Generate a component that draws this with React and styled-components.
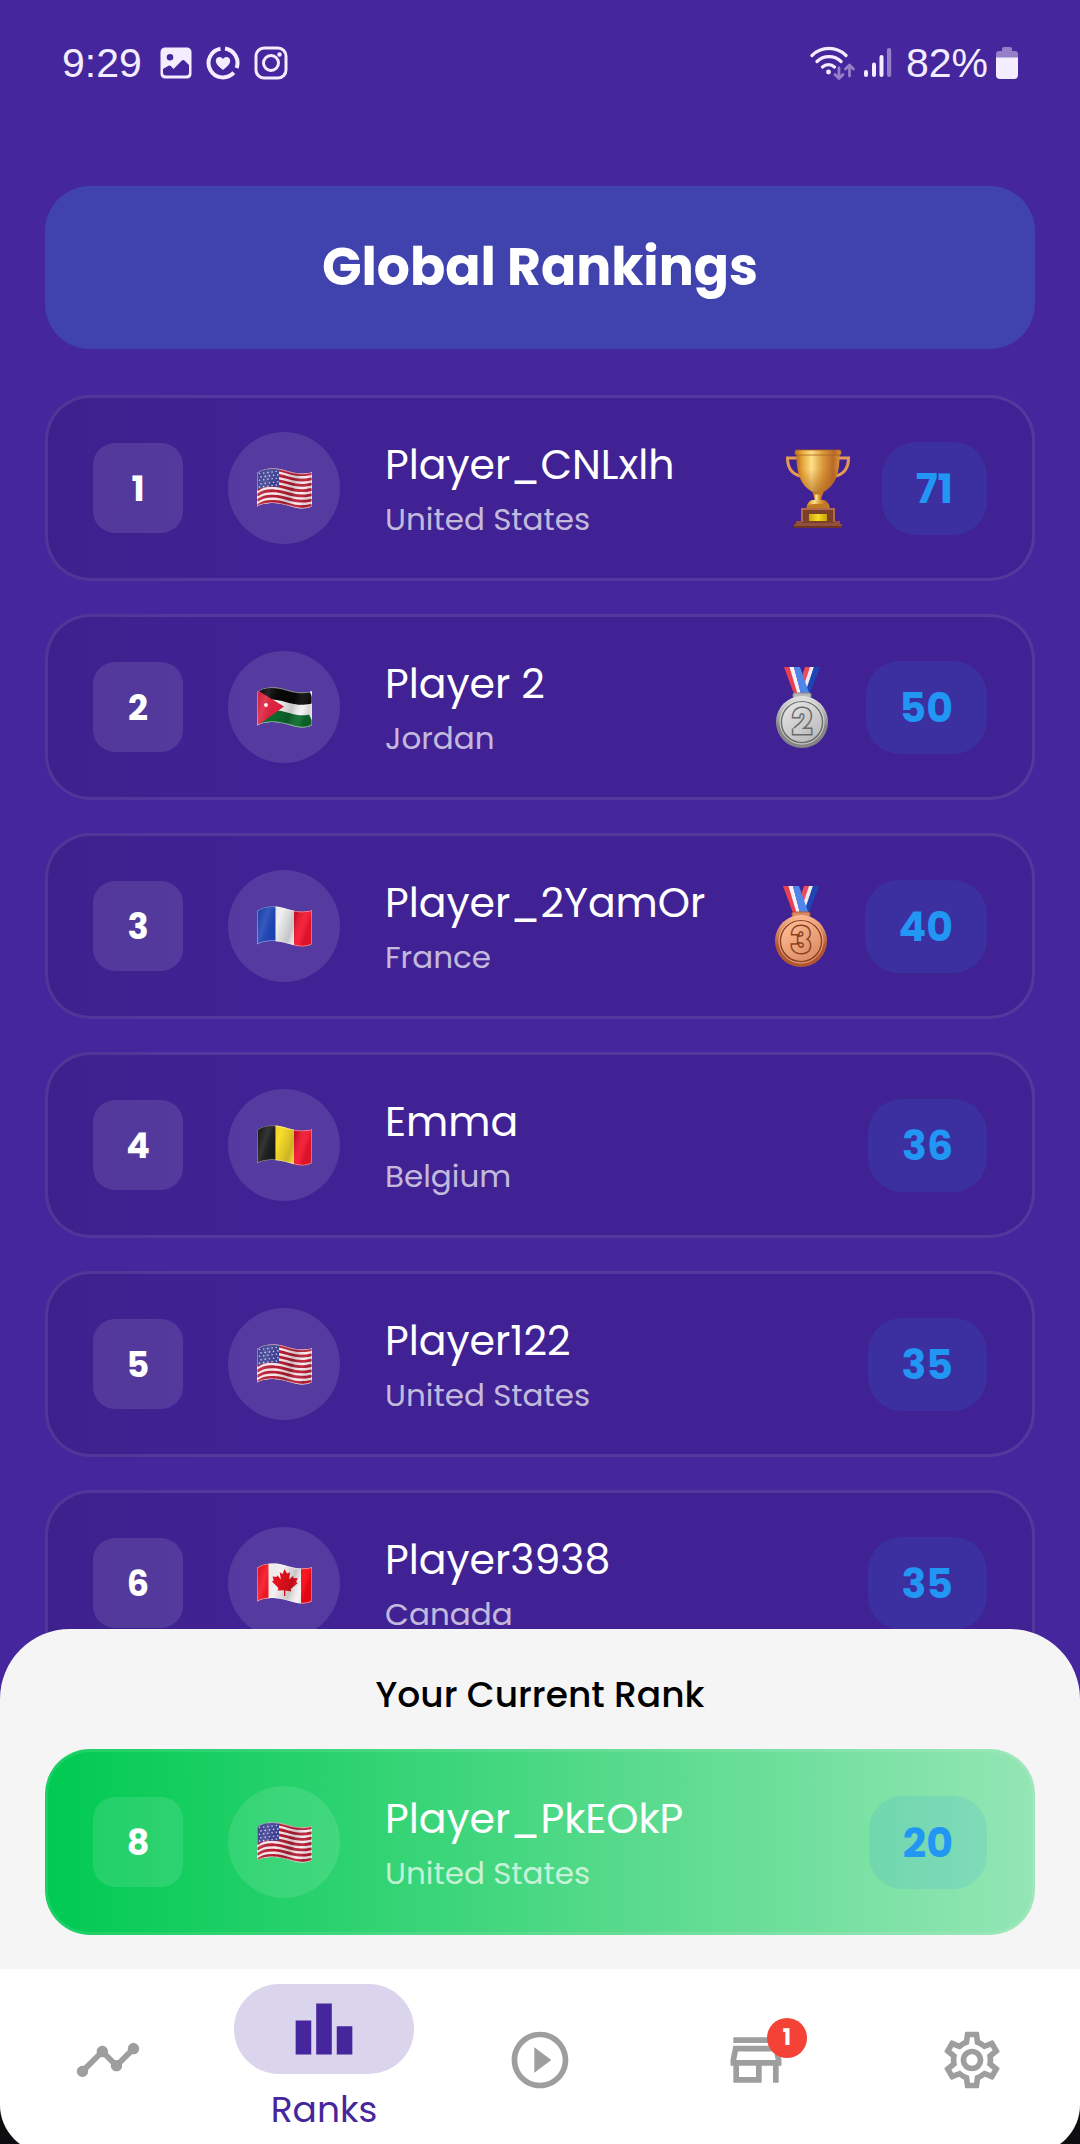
import React from 'react';
import styled, { createGlobalStyle, ThemeProvider } from 'styled-components';
import {
  MdLeaderboard,
  MdOutlineSettings,
  MdOutlineStore,
  MdPlayCircleOutline,
  MdTimeline,
} from 'react-icons/md';

const theme = {
  colors: {
    primary: '#45269c',
    banner: '#4043ae',
    accent: '#2196f3',
    sheet: '#f5f5f5',
    muted: '#9e9e9e',
    danger: '#f44336',
  },
  gutter: '45px',
};

const GlobalStyle = createGlobalStyle`
  * {
    box-sizing: border-box;
  }
  body {
    margin: 0;
    background: #0e0e10;
    font-family: Poppins, Inter, sans-serif;
  }
`;

const Screen = styled.div`
  display: flex;
  flex-direction: column;
  height: 100vh;
  overflow: hidden;
  background: ${(p) => p.theme.colors.primary};
  color: #fff;
`;

const StatusBar = styled.div`
  display: flex;
  flex-shrink: 0;
  justify-content: space-between;
  align-items: center;
  height: 126px;
  padding: 0 62px;
  color: #f3edff;
  font-family: 'Liberation Sans', Arial, sans-serif;
  font-size: 41px;
`;

const StatusGroup = styled.div`
  display: flex;
  align-items: center;
  gap: ${(p) => p.$gap};
`;

const Clock = styled.span`
  margin-right: 4px;
`;

const Percent = styled.span`
  margin-left: 6px;
`;

const Banner = styled.header`
  display: flex;
  flex-shrink: 0;
  align-items: center;
  justify-content: center;
  height: 163px;
  margin: 60px ${(p) => p.theme.gutter} 0;
  border-radius: 45px;
  background: ${(p) => p.theme.colors.banner};
`;

const Title = styled.h1`
  margin: 0;
  padding-bottom: 2px;
  font-size: 52px;
  font-weight: 700;
`;

const List = styled.ol`
  display: flex;
  flex: 1;
  flex-direction: column;
  gap: 33px;
  min-height: 0;
  margin: 0;
  padding: 46px ${(p) => p.theme.gutter};
  overflow-y: auto;
  scrollbar-width: none;
  list-style: none;
`;

const Row = styled.li`
  display: flex;
  flex-shrink: 0;
  align-items: center;
  height: 186px;
  padding: 0 45px;
  border: 3px solid rgba(255, 255, 255, 0.1);
  border-radius: 45px;
  background: ${(p) =>
    p.$current
      ? 'linear-gradient(90deg, #00ca52, #94e6b5) border-box'
      : 'linear-gradient(90deg, #3e208d, #402294 20%) border-box'};
`;

const Rank = styled.span`
  display: flex;
  align-items: center;
  justify-content: center;
  width: 90px;
  height: 90px;
  border-radius: 22px;
  background: rgba(255, 255, 255, 0.11);
  font-size: 35px;
  font-weight: 700;
`;

const FlagCircle = styled.span`
  display: flex;
  align-items: center;
  justify-content: center;
  width: 112px;
  height: 112px;
  margin: 0 45px;
  border-radius: 50%;
  background: rgba(255, 255, 255, 0.11);
`;

const Info = styled.div`
  flex: 1;
  min-width: 0;
`;

const Name = styled.div`
  font-size: 41px;
  font-weight: 400;
  line-height: 62px;
  white-space: nowrap;
`;

const Country = styled.div`
  color: rgba(255, 255, 255, 0.7);
  font-size: 31px;
  font-weight: 400;
  line-height: 46px;
`;

const Score = styled.span`
  display: flex;
  align-items: center;
  height: 93px;
  margin-left: 22px;
  padding: 0 34px;
  border-radius: 34px;
  background: rgba(33, 150, 243, 0.12);
  color: ${(p) => p.theme.colors.accent};
  font-size: 41px;
  font-weight: 700;
`;

/* slides over the end of the list */
const Sheet = styled.section`
  position: relative;
  flex-shrink: 0;
  margin-top: -70px;
  padding: 34px ${(p) => p.theme.gutter};
  border-radius: 70px 70px 0 0;
  background: ${(p) => p.theme.colors.sheet};
`;

const SheetTitle = styled.h2`
  margin: 0 0 22px;
  color: #000;
  font-size: 36px;
  font-weight: 500;
  line-height: 64px;
  text-align: center;
`;

const NavArea = styled.div`
  flex-shrink: 0;
  background: #0e0e10;
`;

const Nav = styled.nav`
  display: grid;
  grid-template-columns: repeat(5, 1fr);
  height: 184px;
  margin-bottom: -9px;
  border-radius: 0 0 48px 48px;
  background: #fff;
`;

const NavButton = styled.button`
  display: flex;
  flex-direction: column;
  align-items: center;
  justify-content: ${(p) => (p.$active ? 'flex-start' : 'center')};
  padding: ${(p) => (p.$active ? '15px 0 0' : '0 0 2px')};
  border: none;
  background: none;
  color: ${(p) => (p.$active ? p.theme.colors.primary : p.theme.colors.muted)};
  font-family: inherit;
  font-size: 36px;
  font-weight: 400;
  line-height: 52px;
  cursor: pointer;
`;

const Pill = styled.span`
  display: flex;
  align-items: center;
  justify-content: center;
  width: 180px;
  height: 90px;
  margin-bottom: 10px;
  border-radius: 45px;
  background: #dad4ec;
`;

const IconBox = styled.span`
  position: relative;
  display: flex;
`;

const Notice = styled.span`
  position: absolute;
  top: -8px;
  left: 45px;
  width: 40px;
  height: 40px;
  border-radius: 50%;
  background: ${(p) => p.theme.colors.danger};
  color: #fff;
  font-size: 22px;
  font-weight: 700;
  line-height: 40px;
  text-align: center;
`;

const ImageIcon = () => (
  <svg width='32' height='32' viewBox='0 0 32 32'>
    <path
      fill='currentColor'
      fillRule='evenodd'
      d='M5 .5h22A4.5 4.5 0 0 1 31.5 5v22a4.500 4.500 0 0 1-4.500 4.500H5A4.500 4.500 0 0 1 .5 27V5A4.500 4.500 0 0 1 5 .5ZM10 7a3.300 3.300 0 1 0 0 6.600A3.300 3.300 0 0 0 10 7ZM3 22v3.500a3 3 0 0 0 3 3h20a3 3 0 0 0 3-3V18l-4.500-4.500a2 2 0 0 0-2.600 0L13.500 22l-2.800-3a2 2 0 0 0-2.600 0Z'
    />
  </svg>
);

const HeartRingIcon = () => (
  <svg width='34' height='34' viewBox='0 0 34 34'>
    <g fill='none' stroke='currentColor' strokeWidth='4'>
      <path d='M19 2.6A14.5 14.5 0 0 1 30.6 22' />
      <path d='M27.8 26.7A14.5 14.5 0 1 1 14.5 2.7' />
    </g>
    <path
      fill='currentColor'
      d='M17 24c-4-3.200-7.200-5.800-7.200-9.200 0-2.300 1.700-3.900 3.800-3.900 1.400 0 2.700.8 3.400 2 .7-1.200 2-2 3.400-2 2.100 0 3.800 1.600 3.800 3.900 0 3.400-3.200 6-7.200 9.200Z'
    />
  </svg>
);

const InstagramIcon = () => (
  <svg width='34' height='34' viewBox='0 0 34 34' fill='none' stroke='currentColor' strokeWidth='3'>
    <rect x='2' y='2' width='30' height='30' rx='8' />
    <circle cx='17' cy='17' r='7.5' />
    <circle cx='25.5' cy='8.5' r='2.2' fill='currentColor' stroke='none' />
  </svg>
);

const WifiIcon = () => (
  <svg width='46' height='34' viewBox='0 0 46 34' fill='none' stroke='currentColor' strokeWidth='3.2' strokeLinecap='round'>
    <path d='M2 9.500a24 24 0 0 1 34 0M7 15.500a17 17 0 0 1 24 0M12.500 21a9 9 0 0 1 12 0' />
    <circle cx='18.5' cy='26' r='2.4' fill='currentColor' stroke='none' />
    <g opacity='0.45' strokeWidth='2.8' strokeLinejoin='round'>
      <path d='M29 22v10M25 28.500l4 4 4-4M39.500 30V19.500M35.500 23l4-4 4 4' />
    </g>
  </svg>
);

const SignalIcon = () => (
  <svg width='28' height='32' viewBox='0 0 28 32' fill='currentColor'>
    <rect x='0' y='23' width='4' height='7' rx='2' />
    <rect x='8' y='15.5' width='4' height='14.5' rx='2' />
    <rect x='15.5' y='8' width='4' height='22' rx='2' />
    <rect x='23' y='1' width='4.2' height='29' rx='2' opacity='0.45' />
  </svg>
);

const BatteryIcon = () => (
  <svg width='22' height='32' viewBox='0 0 22 32' fill='currentColor'>
    <path opacity='0.45' d='M0 11V7a3 3 0 0 1 3-3h3V2a2 2 0 0 1 2-2h6a2 2 0 0 1 2 2v2h3a3 3 0 0 1 3 3v4Z' />
    <path d='M0 10.500h22V28a4 4 0 0 1-4 4H4a4 4 0 0 1-4-4Z' />
  </svg>
);

const FLAG_WAVE = 'M0 5C5 1 12 0 18 .5C28 1 35 6 46 5.500C50 5.300 53 5 55 4';
const FLAG_SHAPE = `${FLAG_WAVE}V38C50 41 44 41 38 39.500C30 37 22 34.500 14 35C8 35.500 4 36 0 38.500Z`;

const Band = ({ from, size, color }) => (
  <path
    d={FLAG_WAVE}
    transform={`translate(0 ${from + size / 2})`}
    fill='none'
    stroke={color}
    strokeWidth={size + 0.4}
  />
);

const STRIPES = [0, 2, 4, 6, 8, 10, 12];
const STARS = [0, 1, 2, 3, 4].flatMap((row) =>
  [0, 1, 2, 3, 4].map((col) => [2.5 + col * 4.2 + (row % 2) * 1.5, 5.5 + row * 3.4 - col * 0.5])
);

const flagArt = {
  us: (
    <>
      <rect width='55' height='41' fill='#fbe9ee' />
      {STRIPES.map((n) => (
        <Band key={n} from={n * 2.65} size={2.4} color='#b81f35' />
      ))}
      <path d='M0 5C5 1 12 0 22 .8V19C14 18 6 18 0 22Z' fill='#3f4294' />
      {STARS.map(([x, y]) => (
        <circle key={`${x}-${y}`} cx={x} cy={y} r='0.8' fill='#d5d5f2' />
      ))}
    </>
  ),
  jo: (
    <>
      <rect width='55' height='41' fill='#f2f2f2' />
      <Band from={-1} size={13} color='#080808' />
      <Band from={23} size={13} color='#0b6b2c' />
      <path d='M0 3L27 19.500 0 39Z' fill='#e0213f' />
      <circle cx='9' cy='18' r='1.9' fill='#fff' />
    </>
  ),
  fr: (
    <>
      <rect width='18.5' height='41' fill='#1c43b4' />
      <rect x='18.5' width='18.5' height='41' fill='#f0f0f0' />
      <rect x='37' width='18' height='41' fill='#f5152f' />
    </>
  ),
  be: (
    <>
      <rect width='18.5' height='41' fill='#1a1a1a' />
      <rect x='18.5' width='18.5' height='41' fill='#f9dc2b' />
      <rect x='37' width='18' height='41' fill='#f3152f' />
    </>
  ),
  ca: (
    <>
      <rect width='55' height='41' fill='#f4f2f3' />
      <rect width='11.5' height='41' fill='#f4101d' />
      <rect x='44' width='11' height='41' fill='#fb0714' />
      <path
        d='M27.500 6l2.500 4.500 3-1.300-.8 7 3.800-3.200.7 2.200 4-.2-1.500 4 1.500 1.200-7 5.800.6 2.600-6-1V33h-1.300v-5.800l-6.200.2.600-2.400-6.400-6.600 1.600-1-1-4 3.800.7.900-1.900 3.600 4.200-1.200-7.200 3 1.800Z'
        fill='#e8101c'
      />
    </>
  ),
};

const Flag = ({ code, id }) => (
  <svg width='55' height='41' viewBox='0 0 55 41'>
    <defs>
      <clipPath id={`${id}-clip`}>
        <path d={FLAG_SHAPE} />
      </clipPath>
      <linearGradient id={`${id}-shade`} x1='0' y1='0' x2='1' y2='0.25'>
        <stop offset='0' stopColor='#000' stopOpacity='0.08' />
        <stop offset='0.22' stopColor='#fff' stopOpacity='0.12' />
        <stop offset='0.45' stopColor='#000' stopOpacity='0' />
        <stop offset='0.72' stopColor='#000' stopOpacity='0.18' />
        <stop offset='0.9' stopColor='#fff' stopOpacity='0.06' />
        <stop offset='1' stopColor='#000' stopOpacity='0.1' />
      </linearGradient>
    </defs>
    <g clipPath={`url(#${id}-clip)`}>
      {flagArt[code]}
      <rect width='55' height='41' fill={`url(#${id}-shade)`} />
      <path d={FLAG_SHAPE} fill='none' stroke='#fff' strokeOpacity='0.5' strokeWidth='1.4' />
    </g>
  </svg>
);

const Trophy = () => (
  <svg width='84' height='84' viewBox='0 0 84 84' role='img' aria-label='Trophy'>
    <defs>
      <linearGradient id='cup'>
        <stop offset='0' stopColor='#b8701d' />
        <stop offset='0.15' stopColor='#e9a83a' />
        <stop offset='0.35' stopColor='#fde08a' />
        <stop offset='0.6' stopColor='#dd9a3a' />
        <stop offset='0.85' stopColor='#b9692a' />
        <stop offset='1' stopColor='#d99239' />
      </linearGradient>
      <linearGradient id='cup-shade' x1='0' y1='0' x2='0' y2='1'>
        <stop offset='0.4' stopColor='#a95a12' stopOpacity='0' />
        <stop offset='1' stopColor='#a95a12' stopOpacity='0.6' />
      </linearGradient>
      <linearGradient id='plate'>
        <stop offset='0' stopColor='#c9a10f' />
        <stop offset='0.5' stopColor='#f5dc26' />
        <stop offset='1' stopColor='#c9a10f' />
      </linearGradient>
    </defs>
    <g fill='none' stroke='#e39a55' strokeWidth='3'>
      <path d='M21 12H11.500C11.500 22 16 28 24.500 30' />
      <path d='M63 12h9.500C72.500 22 68 28 59.500 30' />
    </g>
    <path d='M20.500 8h43C64 26 60 39 47.500 46h-11C24 39 20 26 20.500 8Z' fill='url(#cup)' />
    <path d='M20.500 8h43C64 26 60 39 47.500 46h-11C24 39 20 26 20.500 8Z' fill='url(#cup-shade)' />
    <rect x='19' y='4' width='46' height='5' rx='1.5' fill='url(#cup)' stroke='#a8621a' strokeWidth='0.8' />
    <path d='M37 46h10c0 3-1.500 4-1.500 8h-7c0-4-1.500-5-1.500-8Z' fill='url(#cup)' />
    <ellipse cx='42' cy='47' rx='5.5' ry='1.6' fill='#c07a26' />
    <path d='M36 54h12c3 1 5.500 4 5.500 8h-23c0-4 2.500-7 5.500-8Z' fill='url(#cup)' />
    <ellipse cx='42' cy='60.5' rx='11' ry='2.8' fill='#bd7a22' />
    <rect x='25' y='63' width='34' height='14' fill='#7c3f28' />
    <path d='M25 63h34M26 63v13M58 63v13' stroke='#b3684e' strokeWidth='2' />
    <path d='M20 75h5.500v2h33v-2H64v3h2v4H18v-4h2Z' fill='#91503e' />
    <rect x='33' y='68' width='18' height='7' fill='url(#plate)' />
    <path d='M18 81h48' stroke='#6d3326' strokeWidth='2' />
  </svg>
);

const medalTones = {
  2: { rim: '#858585', light: '#e4e4e4', face: '#b9b9b9', dark: '#6a6a6a', name: 'Silver medal' },
  3: { rim: '#b05632', light: '#ffbd95', face: '#d98a62', dark: '#8a3f20', name: 'Bronze medal' },
};

const Medal = ({ place }) => {
  const tone = medalTones[place];
  return (
    <svg width='84' height='84' viewBox='0 0 84 84' role='img' aria-label={tone.name}>
      <defs>
        <linearGradient id={`face-${place}`} x1='0.2' y1='0' x2='0.8' y2='1'>
          <stop offset='0' stopColor={tone.light} />
          <stop offset='1' stopColor={tone.face} />
        </linearGradient>
        <linearGradient id={`rim-${place}`} x1='0' y1='0' x2='0' y2='1'>
          <stop offset='0' stopColor={tone.light} />
          <stop offset='0.6' stopColor={tone.rim} />
          <stop offset='1' stopColor={tone.rim} />
        </linearGradient>
      </defs>
      <path d='M45 2h5.500L43 23l-3-6Z' fill='#ec4b5b' />
      <path d='M50 2h4L46 28l-3-5Z' fill='#f3e8f0' />
      <path d='M54 2h6L50 28h-5Z' fill='#1d46b5' />
      <path d='M24 2h6l8 27h-4Z' fill='#e8404f' />
      <path d='M29.500 2H34l7 27h-3.500Z' fill='#f7f0f7' />
      <path d='M34 2h6l9.500 27H41Z' fill='#4f86ea' />
      <rect x='33' y='28' width='18' height='5' rx='1.5' fill={tone.face} stroke={tone.rim} />
      <circle cx='42' cy='57' r='26' fill={`url(#rim-${place})`} />
      <circle cx='42' cy='57' r='20.5' fill={`url(#face-${place})`} stroke={tone.dark} strokeWidth='1.2' />
      <circle cx='42' cy='57' r='22' fill='none' stroke={tone.light} strokeWidth='0.8' />
      <text
        x='42'
        y='69'
        textAnchor='middle'
        fontFamily='Poppins, Inter, sans-serif'
        fontSize='35'
        fontWeight='700'
        fill={`url(#face-${place})`}
        stroke={tone.dark}
        strokeWidth='3'
        paintOrder='stroke'
      >
        {place}
      </text>
    </svg>
  );
};

const players = [
  { rank: 1, name: 'Player_CNLxlh', country: 'United States', flag: 'us', score: 71 },
  { rank: 2, name: 'Player 2', country: 'Jordan', flag: 'jo', score: 50 },
  { rank: 3, name: 'Player_2YamOr', country: 'France', flag: 'fr', score: 40 },
  { rank: 4, name: 'Emma', country: 'Belgium', flag: 'be', score: 36 },
  { rank: 5, name: 'Player122', country: 'United States', flag: 'us', score: 35 },
  { rank: 6, name: 'Player3938', country: 'Canada', flag: 'ca', score: 35 },
];

const me = { rank: 8, name: 'Player_PkEOkP', country: 'United States', flag: 'us', score: 20 };

const PlayerRow = ({ player, current, as }) => (
  <Row as={as} $current={current}>
    <Rank>{player.rank}</Rank>
    <FlagCircle>
      <Flag code={player.flag} id={`flag-${player.rank}`} />
    </FlagCircle>
    <Info>
      <Name>{player.name}</Name>
      <Country>{player.country}</Country>
    </Info>
    {player.rank === 1 && <Trophy />}
    {(player.rank === 2 || player.rank === 3) && <Medal place={player.rank} />}
    <Score>{player.score}</Score>
  </Row>
);

export default function App() {
  return (
    <ThemeProvider theme={theme}>
      <GlobalStyle />
      <Screen>
        <StatusBar>
          <StatusGroup $gap='14px'>
            <Clock>9:29</Clock>
            <ImageIcon />
            <HeartRingIcon />
            <InstagramIcon />
          </StatusGroup>
          <StatusGroup $gap='8px'>
            <WifiIcon />
            <SignalIcon />
            <Percent>82%</Percent>
            <BatteryIcon />
          </StatusGroup>
        </StatusBar>
        <Banner>
          <Title>Global Rankings</Title>
        </Banner>
        <List>
          {players.map((player) => (
            <PlayerRow key={player.rank} player={player} />
          ))}
        </List>
        <Sheet>
          <SheetTitle>Your Current Rank</SheetTitle>
          <PlayerRow player={me} current as='div' />
        </Sheet>
        <NavArea>
          <Nav>
            <NavButton aria-label='Activity'>
              <MdTimeline size={68} />
            </NavButton>
            <NavButton $active>
              <Pill>
                <MdLeaderboard size={68} />
              </Pill>
              Ranks
            </NavButton>
            <NavButton aria-label='Play'>
              <MdPlayCircleOutline size={68} />
            </NavButton>
            <NavButton aria-label='Store'>
              <IconBox>
                <MdOutlineStore size={68} />
                <Notice>1</Notice>
              </IconBox>
            </NavButton>
            <NavButton aria-label='Settings'>
              <MdOutlineSettings size={68} />
            </NavButton>
          </Nav>
        </NavArea>
      </Screen>
    </ThemeProvider>
  );
}
